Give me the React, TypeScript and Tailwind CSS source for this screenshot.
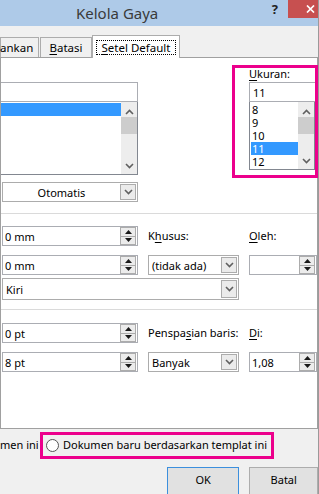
import type { ReactNode } from "react";

function Chevron({ up = false }: { up?: boolean }) {
  return (
    <svg width="9" height="6" viewBox="0 0 9 6">
      <path
        d={up ? "M1 5l3.5-3.5L8 5" : "M1 1l3.5 3.5L8 1"}
        stroke="#606060"
        strokeWidth="1.6"
        fill="none"
      />
    </svg>
  );
}

function Tri({ up = false }: { up?: boolean }) {
  return (
    <svg width="7" height="4" viewBox="0 0 7 4">
      <path d={up ? "M0 4h7L3.5 0z" : "M0 0h7L3.5 4z"} fill="#1a1a1a" />
    </svg>
  );
}

function SpinButtons() {
  return (
    <div className="mr-px flex h-[18px] w-[16px] flex-col border border-[#ACACAC] bg-[#ECECEC]">
      <div className="flex flex-1 items-center justify-center border-b border-[#ACACAC]">
        <Tri up />
      </div>
      <div className="flex flex-1 items-center justify-center">
        <Tri />
      </div>
    </div>
  );
}

function Spin({ value }: { value: string }) {
  return (
    <div className="flex h-[20px] items-center border border-[#ABADB3] bg-white">
      <span className="flex-1 pl-[2px] leading-none">{value}</span>
      <SpinButtons />
    </div>
  );
}

function Dropdown({
  value,
  center = false,
  tall = false,
}: {
  value: string;
  center?: boolean;
  tall?: boolean;
}) {
  return (
    <div
      className={`flex items-center border border-[#ACACAC] bg-white ${
        tall ? "h-[22px]" : "h-[20px]"
      }`}
    >
      <span
        className={`flex-1 leading-none ${center ? "text-center" : "pl-[3px]"}`}
      >
        {value}
      </span>
      <div className="mr-px flex h-[calc(100%-2px)] w-[16px] items-center justify-center border border-[#ACACAC] bg-[#EBEBEB]">
        <Chevron />
      </div>
    </div>
  );
}

function Scrollbar() {
  return (
    <div className="flex w-[16px] flex-col items-center bg-[#EDEDED] pt-[7px]">
      <Chevron up />
      <div className="mt-[2px] h-[17px] w-full bg-[#CDCDCD]" />
      <div className="flex-1" />
      <div className="pb-[5px]">
        <Chevron />
      </div>
    </div>
  );
}

function U({ children }: { children: ReactNode }) {
  return <span className="underline underline-offset-2">{children}</span>;
}

export default function App() {
  return (
    <div className="h-[494px] w-[319px] overflow-hidden border-r border-[#9A9A9A] bg-[#F0F0F0] font-['Noto_Sans',sans-serif] text-[11px] text-black">
      {/* title bar */}
      <div className="flex h-[26px] items-start bg-[#AECAE8]">
        <div className="ml-[76px] mt-[4px] text-[15px] leading-[18px] text-[#3A3A3A]">
          Kelola Gaya
        </div>
        <div className="ml-auto mt-[1px] text-[13px] font-bold leading-[16px] text-[#222]">
          ?
        </div>
        <div className="ml-[10px] flex h-[18px] w-[30px] items-center justify-end bg-[#C75050] pr-[3px]">
          <svg width="9" height="8" viewBox="0 0 9 8">
            <path d="M1 0.5l7 7M8 0.5l-7 7" stroke="#fff" strokeWidth="1.7" />
          </svg>
        </div>
      </div>

      {/* tabs */}
      <div className="flex h-[31px] items-end text-[11.5px]">
        <div className="flex h-[20px] w-[39px] items-center border border-b-0 border-[#ACACAC] bg-[#F0F0F0] leading-none">
          <span className="-ml-px">ankan</span>
        </div>
        <div className="ml-px flex h-[20px] w-[52px] items-center justify-center border border-b-0 border-[#ACACAC] bg-[#F0F0F0] leading-none">
          <U>B</U>atasi
        </div>
        <div className="relative z-10 -mb-px flex h-[23px] w-[88px] items-center justify-center border border-b-0 border-[#ACACAC] bg-white">
          <span className="border border-dotted border-black px-[5px] py-px leading-[11px]">
            <U>S</U>etel Default
          </span>
        </div>
      </div>

      {/* panel */}
      <div className="h-[372px] border border-[#A0A0A0] bg-white">
        <div className="flex items-start">
          <div className="w-[137px] shrink-0">
            <div className="mt-[24px] h-[20px] border-b border-r border-t border-[#ABADB3]" />
            <div className="flex h-[73px] border-b border-r border-[#828790]">
              <div className="flex-1 pt-px">
                <div className="h-[13px] bg-[#3399FF]" />
              </div>
              <Scrollbar />
            </div>
            <div className="ml-px mt-[7px]">
              <Dropdown value="Otomatis" center />
            </div>
          </div>

          <div className="ml-[94px] mt-[7px] w-[86px] shrink-0 border-[3px] border-[#EC008C] pb-[5px] pl-[14px]">
            <div className="h-[14px] leading-[12px]">
              <U>U</U>kuran:
            </div>
            <div className="flex h-[20px] items-center border border-r-0 border-[#ABADB3] pl-[3px] leading-none">
              11
            </div>
            <div className="flex h-[68px] border border-t-0 border-[#828790]">
              <div className="flex-1 pl-px pt-px leading-[13px]">
                <div className="h-[13px] pl-px">8</div>
                <div className="h-[13px] pl-px">9</div>
                <div className="h-[13px] pl-px">10</div>
                <div className="h-[13px] bg-[#3399FF] pl-px text-white">11</div>
                <div className="h-[13px] pl-px">12</div>
              </div>
              <Scrollbar />
            </div>
          </div>
        </div>

        <div className="mt-[11px] h-px bg-[#DADADA]" />

        <div className="mt-[12px] grid grid-cols-[136px_91px_68px] items-center gap-x-[10px] pl-px">
          <Spin value="0 mm" />
          <div>
            K<U>h</U>usus:
          </div>
          <div>
            <U>O</U>leh:
          </div>
        </div>
        <div className="mt-[9px] grid grid-cols-[136px_91px_68px] items-center gap-x-[10px] pl-px">
          <Spin value="0 mm" />
          <Dropdown value="(tidak ada)" />
          <div className="flex h-[20px] items-center justify-end border border-[#ABADB3] bg-white">
            <SpinButtons />
          </div>
        </div>
        <div className="mt-[3px] w-[238px] pl-px">
          <Dropdown value="Kiri" tall />
        </div>

        <div className="mt-[9px] h-px bg-[#DADADA]" />

        <div className="mt-[13px] grid grid-cols-[136px_91px_68px] items-center gap-x-[10px] pl-px">
          <Spin value="0 pt" />
          <div className="whitespace-nowrap">
            Penspa<U>s</U>ian baris:
          </div>
          <div>
            <U>D</U>i:
          </div>
        </div>
        <div className="mt-[9px] grid grid-cols-[136px_91px_68px] items-center gap-x-[10px] pl-px">
          <Spin value="8 pt" />
          <Dropdown value="Banyak" />
          <Spin value="1,08" />
        </div>
      </div>

      {/* bottom */}
      <div className="mt-[3px] flex items-center">
        <span className="w-[40px] whitespace-nowrap">men ini</span>
        <div className="flex h-[27px] w-[234px] items-center border-[3px] border-[#EC008C] pl-[3px]">
          <span className="h-[13px] w-[13px] rounded-full border border-[#555] bg-white" />
          <span className="ml-[4px] whitespace-nowrap">
            Dokumen baru berdasarkan templat ini
          </span>
        </div>
      </div>
      <div className="mt-[8px] flex">
        <div className="ml-[167px] flex h-[28px] w-[74px] items-center justify-center border border-[#3C8FDD] bg-[#E1E1E1] pb-[2px]">
          OK
        </div>
        <div className="ml-[10px] flex h-[28px] w-[70px] items-center justify-center border border-[#ADADAD] bg-[#E1E1E1] pb-[2px]">
          Batal
        </div>
      </div>
    </div>
  );
}
